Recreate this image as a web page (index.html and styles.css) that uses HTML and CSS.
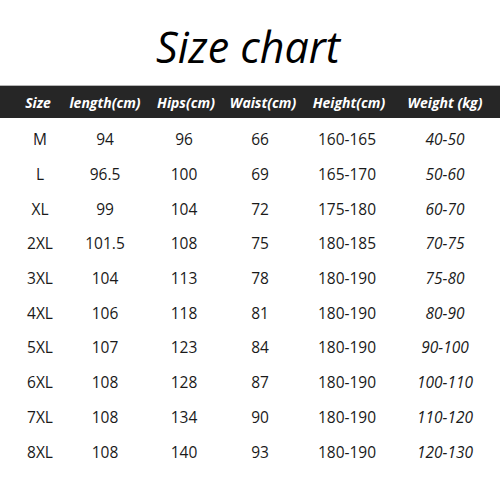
FILE: index.html
```html
<!DOCTYPE html>
<html>
<head>
<meta charset="utf-8">
<link rel="stylesheet" href="styles.css">
</head>
<body>
<div class="page">
  <h1 class="title">Size chart</h1>
  <div class="table">
    <div class="row head">
      <span>Size</span><span>length(cm)</span><span>Hips(cm)</span><span>Waist(cm)</span><span>Height(cm)</span><span>Weight (kg)</span>
    </div>
    <div class="body">
      <div class="row"><span>M</span><span>94</span><span>96</span><span>66</span><span>160-165</span><span class="w">40-50</span></div>
      <div class="row"><span>L</span><span>96.5</span><span>100</span><span>69</span><span>165-170</span><span class="w">50-60</span></div>
      <div class="row"><span>XL</span><span>99</span><span>104</span><span>72</span><span>175-180</span><span class="w">60-70</span></div>
      <div class="row"><span>2XL</span><span>101.5</span><span>108</span><span>75</span><span>180-185</span><span class="w">70-75</span></div>
      <div class="row"><span>3XL</span><span>104</span><span>113</span><span>78</span><span>180-190</span><span class="w">75-80</span></div>
      <div class="row"><span>4XL</span><span>106</span><span>118</span><span>81</span><span>180-190</span><span class="w">80-90</span></div>
      <div class="row"><span>5XL</span><span>107</span><span>123</span><span>84</span><span>180-190</span><span class="w">90-100</span></div>
      <div class="row"><span>6XL</span><span>108</span><span>128</span><span>87</span><span>180-190</span><span class="w">100-110</span></div>
      <div class="row"><span>7XL</span><span>108</span><span>134</span><span>90</span><span>180-190</span><span class="w">110-120</span></div>
      <div class="row"><span>8XL</span><span>108</span><span>140</span><span>93</span><span>180-190</span><span class="w">120-130</span></div>
    </div>
  </div>
</div>
</body>
</html>
```
FILE: styles.css
```css
html, body {
  margin: 0;
  padding: 0;
  background: #fff;
}
.page {
  width: 500px;
  height: 500px;
  font-family: "Open Sans", "DejaVu Sans", sans-serif;
  color: #1a1a1a;
  overflow: hidden;
}
.title {
  margin: 0;
  height: 85px;
  display: flex;
  align-items: center;
  justify-content: center;
  padding-right: 4px;
  box-sizing: border-box;
  padding-top: 7px;
  font-size: 43px;
  font-style: italic;
  font-weight: 400;
  color: #000;
}
.row {
  display: grid;
  grid-template-columns: 80px 50px 108px 44px 130px 66px 22px;
  justify-items: center;
  align-items: center;
  white-space: nowrap;
}
.head {
  height: 33px;
  background: #262626;
  border-top: 1px solid #b5b5b5;
  box-sizing: border-box;
  color: #fff;
  font-weight: 700;
  font-style: italic;
  font-size: 14px;
}
.head span:nth-child(1) { transform: translateX(-2px); }
.head span:nth-child(3) { transform: translateX(2px); }
.head span:nth-child(4) { transform: translateX(3px); }
.head span:nth-child(5) { transform: translateX(2px); }
.body {
  padding-top: 4px;
}
.body .row {
  height: 34.7px;
  font-size: 15.5px;
}
.w {
  font-style: italic;
}
```
